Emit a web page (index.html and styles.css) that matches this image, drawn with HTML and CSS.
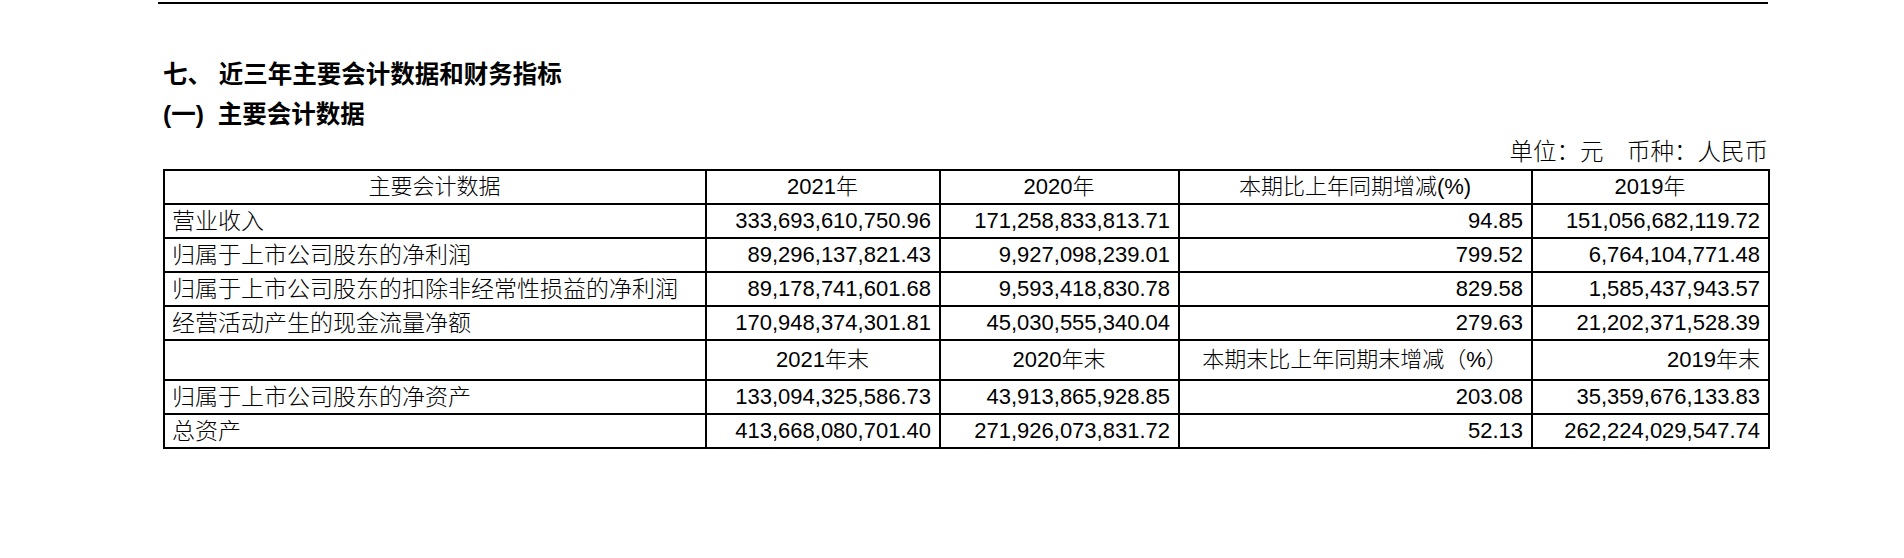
FILE: index.html
```html
<!DOCTYPE html>
<html lang="zh-CN">
<head>
<meta charset="utf-8">
<title>近三年主要会计数据和财务指标</title>
<link rel="stylesheet" href="styles.css">
</head>
<body>
<div class="page">
  <div class="rule"></div>
  <div class="content">
    <h1 class="h1">七、 近三年主要会计数据和财务指标</h1>
    <h2 class="h2">(一)<span class="gap"></span>主要会计数据</h2>
    <div class="unit">单位：元&emsp;币种：人民币</div>
    <table class="data">
      <colgroup>
        <col class="c1"><col class="c2"><col class="c3"><col class="c4"><col class="c5">
      </colgroup>
      <tr class="row">
        <td class="center">主要会计数据</td>
        <td class="center">2021年</td>
        <td class="center">2020年</td>
        <td class="center">本期比上年同期增减(%)</td>
        <td class="center">2019年</td>
      </tr>
      <tr class="row">
        <td class="label">营业收入</td>
        <td class="num">333,693,610,750.96</td>
        <td class="num">171,258,833,813.71</td>
        <td class="num">94.85</td>
        <td class="num">151,056,682,119.72</td>
      </tr>
      <tr class="row">
        <td class="label">归属于上市公司股东的净利润</td>
        <td class="num">89,296,137,821.43</td>
        <td class="num">9,927,098,239.01</td>
        <td class="num">799.52</td>
        <td class="num">6,764,104,771.48</td>
      </tr>
      <tr class="row">
        <td class="label">归属于上市公司股东的扣除非经常性损益的净利润</td>
        <td class="num">89,178,741,601.68</td>
        <td class="num">9,593,418,830.78</td>
        <td class="num">829.58</td>
        <td class="num">1,585,437,943.57</td>
      </tr>
      <tr class="row">
        <td class="label">经营活动产生的现金流量净额</td>
        <td class="num">170,948,374,301.81</td>
        <td class="num">45,030,555,340.04</td>
        <td class="num">279.63</td>
        <td class="num">21,202,371,528.39</td>
      </tr>
      <tr class="row tall">
        <td class="label"></td>
        <td class="center">2021年末</td>
        <td class="center">2020年末</td>
        <td class="center">本期末比上年同期末增减（%）</td>
        <td class="num">2019年末</td>
      </tr>
      <tr class="row">
        <td class="label">归属于上市公司股东的净资产</td>
        <td class="num">133,094,325,586.73</td>
        <td class="num">43,913,865,928.85</td>
        <td class="num">203.08</td>
        <td class="num">35,359,676,133.83</td>
      </tr>
      <tr class="row">
        <td class="label">总资产</td>
        <td class="num">413,668,080,701.40</td>
        <td class="num">271,926,073,831.72</td>
        <td class="num">52.13</td>
        <td class="num">262,224,029,547.74</td>
      </tr>
    </table>
  </div>
</div>
</body>
</html>
```
FILE: styles.css
```css
html, body {
  margin: 0;
  padding: 0;
  background: #ffffff;
}
body {
  font-family: "Liberation Sans", "Noto Sans CJK SC", sans-serif;
  color: #000;
}
.page {
  margin-left: 158px;
  width: 1610px;
  padding-top: 2px;
}
.rule {
  height: 2px;
  background: #000;
}
.content {
  padding-left: 5px;
}
.h1, .h2 {
  margin: 0;
  font-family: "Liberation Sans", "Noto Sans CJK SC", sans-serif;
  font-weight: 700;
  font-size: 24.5px;
  line-height: 40px;
}
.h1 {
  margin-top: 51px;
}
.gap {
  display: inline-block;
  width: 14px;
}
.unit {
  text-align: right;
  font-size: 23.5px;
  line-height: 34px;
  font-weight: 300;
}
.data {
  border-collapse: collapse;
  width: 1605px;
  table-layout: fixed;
  font-size: 22px;
}
.c1 { width: 542px; }
.c2 { width: 234px; }
.c3 { width: 239px; }
.c4 { width: 353px; }
.c5 { width: 237px; }
.data td {
  border: 2px solid #000;
  padding: 0 8px 0 7px;
  line-height: 28px;
  white-space: nowrap;
  overflow: hidden;
  vertical-align: middle;
  font-weight: 300;
}
.data td.label {
  font-size: 23px;
}
.row { height: 34px; }
.row.tall { height: 40px; }
.center { text-align: center; }
.label { text-align: left; }
.num { text-align: right; }
```
